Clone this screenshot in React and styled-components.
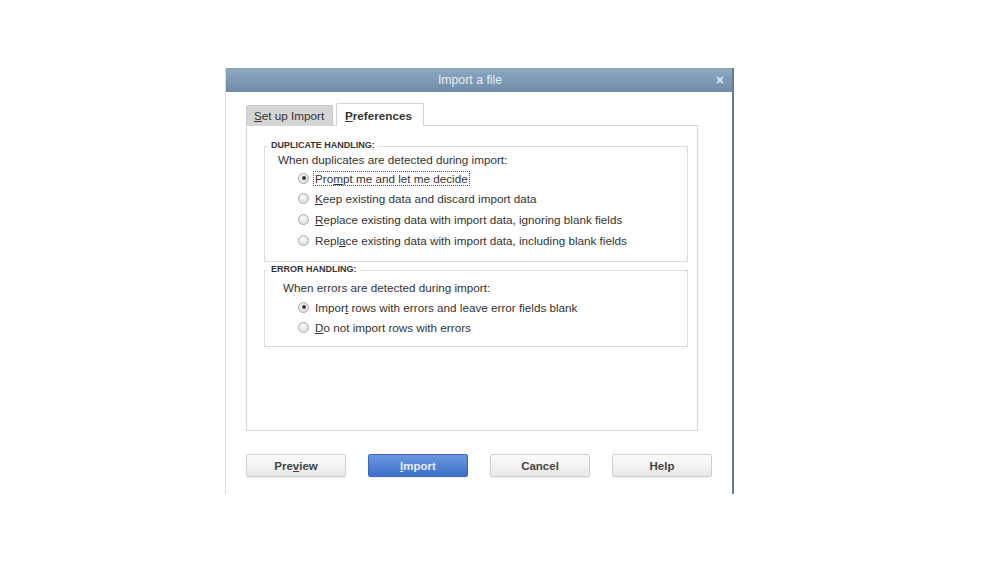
import React from "react";
import styled, { createGlobalStyle } from "styled-components";

const Global = createGlobalStyle`
  html, body { margin: 0; padding: 0; background: #ffffff; }
  body { font-family: "Liberation Sans", Arial, sans-serif; }
`;

const Page = styled.div`
  width: 999px;
  height: 562px;
  padding: 68px 0 0 225px;
  box-sizing: border-box;
  background: #fff;
`;

const Dialog = styled.div`
  width: 509px;
  height: 426px;
  box-sizing: border-box;
  border-left: 1px solid #d3dae2;
  border-right: 2px solid #5d7c99;
  display: flex;
  flex-direction: column;
  background: #fff;
`;

const TitleBar = styled.div`
  height: 24px;
  flex: none;
  box-sizing: border-box;
  padding-right: 18px;
  background: linear-gradient(#8ea8c1, #6f8ca8);
  display: flex;
  align-items: center;
  justify-content: center;
  position: relative;
  color: #e6edf4;
  font-size: 12.3px;
`;

const Close = styled.span`
  position: absolute;
  right: 8px;
  top: 4px;
  font-size: 14px;
  font-weight: bold;
  color: #dfe6ee;
`;

const Body = styled.div`
  padding: 11px 0 0 20px;
  display: flex;
  flex-direction: column;
`;

const Tabs = styled.div`
  display: flex;
  align-items: flex-end;
  gap: 3px;
  height: 22px;
`;

const Tab = styled.div`
  box-sizing: border-box;
  height: ${(p) => (p.$active ? "23px" : "20px")};
  width: ${(p) => (p.$active ? "88px" : "87px")};
  padding-left: ${(p) => (p.$active ? "8px" : "7px")};
  display: flex;
  align-items: center;
  font-size: 11.7px;
  font-weight: ${(p) => (p.$active ? "bold" : "normal")};
  color: #333;
  background: ${(p) => (p.$active ? "#fff" : "#d5d5d5")};
  border: 1px solid ${(p) => (p.$active ? "#d3d3d3" : "#cbcbcb")};
  border-bottom: none;
  border-radius: 2px 2px 0 0;
  margin-bottom: ${(p) => (p.$active ? "-1px" : "0")};
  position: relative;
  z-index: ${(p) => (p.$active ? 1 : 0)};
`;

const Panel = styled.div`
  box-sizing: border-box;
  width: 452px;
  height: 306px;
  border: 1px solid #d6d6d6;
  padding: 20px 9px 0 17px;
  display: flex;
  flex-direction: column;
  gap: 8px;
`;

const Group = styled.div`
  position: relative;
  box-sizing: border-box;
  height: ${(p) => p.$h}px;
  border: 1px solid #dcdcdc;
  padding: ${(p) => p.$pad};
  display: flex;
  flex-direction: column;
`;

const Legend = styled.span`
  position: absolute;
  left: 3px;
  top: -7px;
  padding: 0 3px;
  background: #fff;
  font-size: 9px;
  font-weight: bold;
  color: #333;
`;

const Prompt = styled.div`
  font-size: 11.7px;
  color: #333;
  height: 14px;
  line-height: 14px;
`;

const Options = styled.div`
  display: flex;
  flex-direction: column;
  padding-left: ${(p) => p.$indent}px;
  margin-top: ${(p) => p.$top}px;
  gap: ${(p) => p.$gap}px;
`;

const Option = styled.div`
  display: flex;
  align-items: center;
  gap: 4px;
  height: 16px;
  font-size: 11.7px;
  color: #333;
`;

const Radio = styled.span`
  box-sizing: border-box;
  width: 11px;
  height: 11px;
  border-radius: 50%;
  border: 1px solid #a9a9a9;
  background: radial-gradient(circle at 40% 35%, #fafafa, #d6d6d6);
  display: flex;
  align-items: center;
  justify-content: center;
  &::after {
    content: "";
    width: 4px;
    height: 4px;
    border-radius: 50%;
    background: ${(p) => (p.$checked ? "#3d3d3d" : "transparent")};
  }
`;

const Label = styled.span`
  box-sizing: border-box;
  padding: 0 1px;
  border: 1px ${(p) => (p.$focus ? "dotted #555" : "solid transparent")};
  line-height: 13px;
`;

const U = styled.span`
  text-decoration: underline;
`;

const Buttons = styled.div`
  display: flex;
  gap: 22px;
  margin-top: 23px;
`;

const Button = styled.div`
  box-sizing: border-box;
  width: 100px;
  height: 23px;
  display: flex;
  align-items: center;
  justify-content: center;
  font-size: 11.5px;
  font-weight: bold;
  border-radius: 2px;
  color: ${(p) => (p.$primary ? "#e9eef7" : "#444")};
  border: 1px solid ${(p) => (p.$primary ? "#3c68b8" : "#cfcfcf")};
  background: ${(p) =>
    p.$primary
      ? "linear-gradient(#6b98df, #3e6fca)"
      : "linear-gradient(#fbfbfb, #e9e9e9)"};
  box-shadow: 0 1px 1px rgba(0, 0, 0, 0.06);
`;

export default function App() {
  return (
    <Page>
      <Global />
      <Dialog>
        <TitleBar>
          Import a file
          <Close>×</Close>
        </TitleBar>
        <Body>
          <Tabs>
            <Tab>
              <U>S</U>et up Import
            </Tab>
            <Tab $active>
              <U>P</U>references
            </Tab>
          </Tabs>
          <Panel>
            <Group $h={116} $pad="6px 0 0 13px">
              <Legend>DUPLICATE HANDLING:</Legend>
              <Prompt>When duplicates are detected during import:</Prompt>
              <Options $indent={20} $top={3} $gap={4.7}>
                <Option>
                  <Radio $checked />
                  <Label $focus>
                    Pro<U>m</U>pt me and let me decide
                  </Label>
                </Option>
                <Option>
                  <Radio />
                  <Label>
                    <U>K</U>eep existing data and discard import data
                  </Label>
                </Option>
                <Option>
                  <Radio />
                  <Label>
                    <U>R</U>eplace existing data with import data, ignoring blank fields
                  </Label>
                </Option>
                <Option>
                  <Radio />
                  <Label>
                    Repl<U>a</U>ce existing data with import data, including blank fields
                  </Label>
                </Option>
              </Options>
            </Group>
            <Group $h={77} $pad="10px 0 0 18px">
              <Legend>ERROR HANDLING:</Legend>
              <Prompt>When errors are detected during import:</Prompt>
              <Options $indent={15} $top={4} $gap={4}>
                <Option>
                  <Radio $checked />
                  <Label>
                    Impor<U>t</U> rows with errors and leave error fields blank
                  </Label>
                </Option>
                <Option>
                  <Radio />
                  <Label>
                    <U>D</U>o not import rows with errors
                  </Label>
                </Option>
              </Options>
            </Group>
          </Panel>
          <Buttons>
            <Button>
              Pre<U>v</U>iew
            </Button>
            <Button $primary>
              <U>I</U>mport
            </Button>
            <Button>Cancel</Button>
            <Button>Help</Button>
          </Buttons>
        </Body>
      </Dialog>
    </Page>
  );
}
